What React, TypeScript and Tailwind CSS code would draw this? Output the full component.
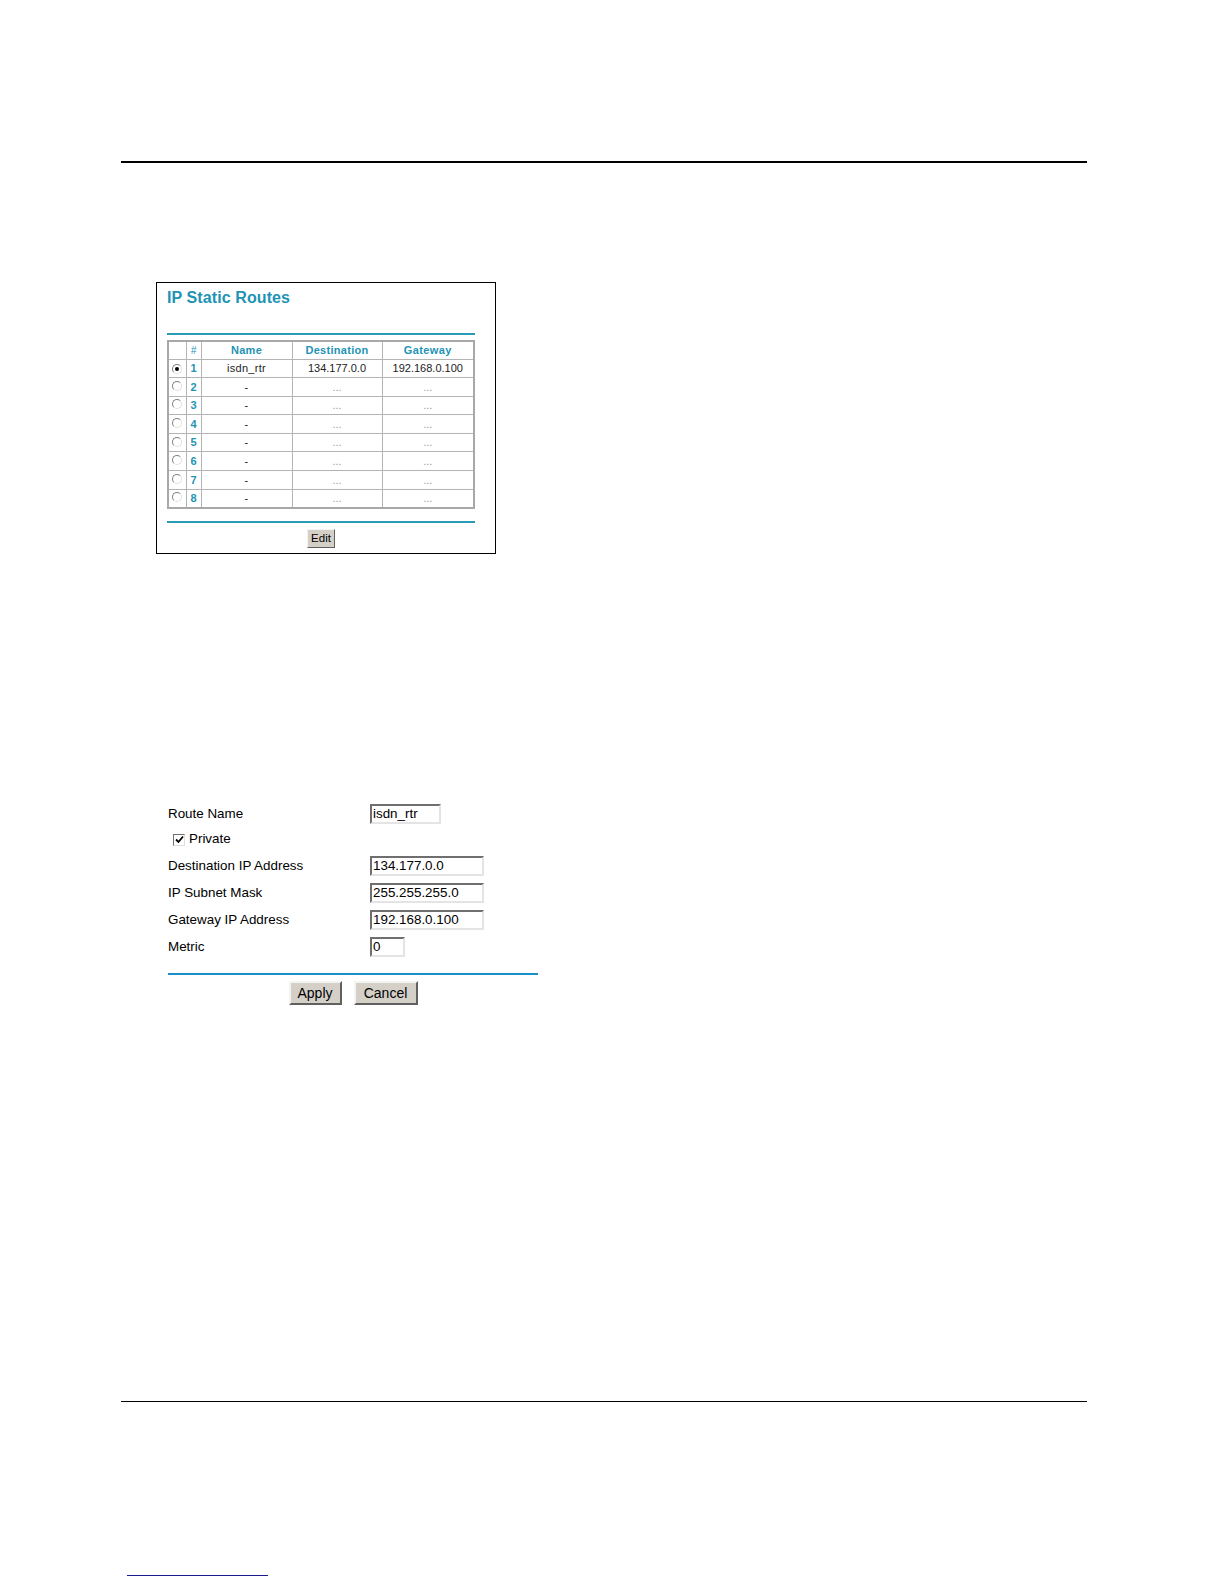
import React from 'react';

const routes = [
  { n: 1, name: 'isdn_rtr', dest: '134.177.0.0', gw: '192.168.0.100', on: true },
  { n: 2, name: '-', dest: '...', gw: '...', on: false },
  { n: 3, name: '-', dest: '...', gw: '...', on: false },
  { n: 4, name: '-', dest: '...', gw: '...', on: false },
  { n: 5, name: '-', dest: '...', gw: '...', on: false },
  { n: 6, name: '-', dest: '...', gw: '...', on: false },
  { n: 7, name: '-', dest: '...', gw: '...', on: false },
  { n: 8, name: '-', dest: '...', gw: '...', on: false },
];

const fields = [
  { label: 'Destination IP Address', value: '134.177.0.0', w: 'w-[114px]' },
  { label: 'IP Subnet Mask', value: '255.255.255.0', w: 'w-[114px]' },
  { label: 'Gateway IP Address', value: '192.168.0.100', w: 'w-[114px]' },
  { label: 'Metric', value: '0', w: 'w-[35px]' },
];

function Radio({ on }: { on: boolean }) {
  return (
    <span className="inline-flex w-[10px] h-[10px] rounded-full border border-t-[#808080] border-l-[#808080] border-b-[#e0e0e0] border-r-[#e0e0e0] bg-white items-center justify-center">
      {on && <span className="w-[4px] h-[4px] rounded-full bg-black" />}
    </span>
  );
}

function TextBox({ value, w }: { value: string; w: string }) {
  return (
    <div
      className={`${w} h-[20px] border-2 border-t-[#6f6f6f] border-l-[#6f6f6f] border-b-[#e4e4e4] border-r-[#e4e4e4] bg-white pl-[1px] text-[13.4px] leading-[16px] text-black`}
    >
      {value}
    </div>
  );
}

function Btn({ children, w }: { children: React.ReactNode; w: string }) {
  return (
    <button
      className={`${w} h-[24px] bg-[#d4d0c8] border-2 border-t-[#f4f4f4] border-l-[#f4f4f4] border-b-[#606060] border-r-[#606060] text-[14px] leading-[18px] text-black`}
    >
      {children}
    </button>
  );
}

export default function App() {
  return (
    <div className="w-[1224px] h-[1584px] overflow-hidden bg-white flex flex-col font-['Liberation_Sans',Arial,sans-serif] text-black">
      {/* header rule */}
      <div className="ml-[121px] mt-[161px] w-[966px] h-[2px] shrink-0 bg-black" />

      {/* IP Static Routes panel */}
      <div className="ml-[156px] mt-[119px] w-[340px] h-[272px] shrink-0 border border-black px-[10px] pt-[6px]">
        <h2 className="text-[16px] leading-[18px] font-bold text-[#1e93b4] tracking-[0.1px]">IP Static Routes</h2>
        <div className="mt-[26px] h-[2px] w-[308px] bg-[#2a9bb5]" />
        <table className="mt-[5px] w-[308px] border-collapse border-2 border-[#a8a8a8] text-[11px]">
          <thead>
            <tr className="h-[16px] text-[#1e93b4] font-bold">
              <th className="w-[18px] border border-[#b4b4b4]" />
              <th className="w-[15px] border border-[#b4b4b4] font-normal italic text-[10px]">#</th>
              <th className="w-[91px] border border-[#b4b4b4] tracking-[0.3px]">Name</th>
              <th className="w-[90px] border border-[#b4b4b4] tracking-[0.3px]">Destination</th>
              <th className="border border-[#b4b4b4] tracking-[0.4px]">Gateway</th>
            </tr>
          </thead>
          <tbody>
            {routes.map((r) => (
              <tr key={r.n} className="h-[18.6px]">
                <td className="border border-[#b4b4b4] text-center leading-none">
                  <Radio on={r.on} />
                </td>
                <td className="border border-[#b4b4b4] text-center font-bold text-[#1e93b4]">{r.n}</td>
                <td className="border border-[#b4b4b4] text-center text-[#222] tracking-[0.3px]">{r.name}</td>
                <td className={`border border-[#b4b4b4] text-center ${r.on ? 'text-[#222]' : 'text-[#9a9a9a]'}`}>
                  {r.dest}
                </td>
                <td className={`border border-[#b4b4b4] text-center ${r.on ? 'text-[#222]' : 'text-[#9a9a9a]'}`}>
                  {r.gw}
                </td>
              </tr>
            ))}
          </tbody>
        </table>
        <div className="mt-[12px] h-[2px] w-[308px] bg-[#2a9bb5]" />
        <div className="flex justify-center w-[308px] mt-[6px]">
          <button className="w-[28px] h-[19px] bg-[#d4d0c8] border border-t-[#f4f4f4] border-l-[#f4f4f4] border-b-[#606060] border-r-[#606060] text-[11.5px] leading-[15px] text-black">
            Edit
          </button>
        </div>
      </div>

      {/* edit form */}
      <div className="ml-[168px] mt-[250px] w-[370px] shrink-0 flex flex-col">
        <div className="flex items-center h-[20px]">
          <span className="w-[202px] text-[13.4px]">Route Name</span>
          <TextBox value="isdn_rtr" w="w-[71px]" />
        </div>
        <div className="flex items-center h-[15px] mt-[8px] ml-[5px]">
          <span className="w-[12px] h-[12px] border border-t-[#707070] border-l-[#707070] border-b-[#e0e0e0] border-r-[#e0e0e0] bg-white flex items-center justify-center">
            <svg width="9" height="9" viewBox="0 0 9 9">
              <path d="M1 4.5 L3.5 7 L8 1.5" fill="none" stroke="#000" strokeWidth="1.8" />
            </svg>
          </span>
          <span className="ml-[4px] text-[13.4px]">Private</span>
        </div>
        {fields.map((f, i) => (
          <div key={f.label} className={`flex items-center h-[20px] ${i === 0 ? 'mt-[9px]' : 'mt-[7px]'}`}>
            <span className="w-[202px] text-[13.4px]">{f.label}</span>
            <TextBox value={f.value} w={f.w} />
          </div>
        ))}
        <div className="mt-[16px] h-[2px] w-[370px] bg-[#1a8fc8]" />
        <div className="flex justify-center gap-[12px] mt-[6px]">
          <Btn w="w-[53px]">Apply</Btn>
          <Btn w="w-[64px]">Cancel</Btn>
        </div>
      </div>

      {/* footer rule */}
      <div className="ml-[121px] mt-[396px] w-[966px] h-px shrink-0 bg-black" />
      <div className="ml-[127px] mt-[173px] w-[141px] h-px shrink-0 bg-[#1a1a8c]" />
    </div>
  );
}
